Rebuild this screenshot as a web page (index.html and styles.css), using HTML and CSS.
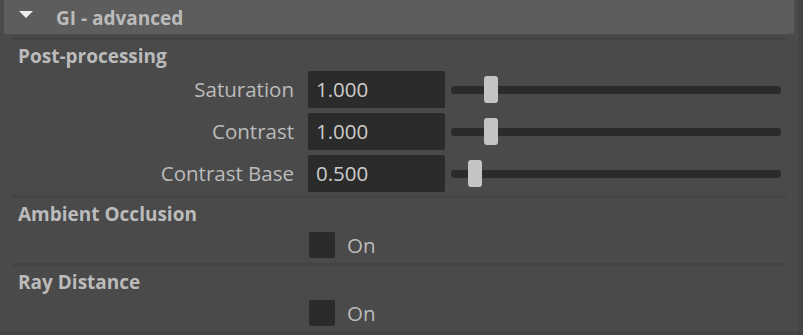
FILE: index.html
```html
<!DOCTYPE html>
<html>
<head>
	<link rel="stylesheet" href="styles.css">
</head>
<body>

	<div class="panel">
		<div class="frameHeader">
			<span class="arrow"></span>
			<span class="frameTitle">GI - advanced</span>
		</div>
		<div class="separator"></div>

		<div class="sectionTitle">Post-processing</div>
		<div class="attrRow">
			<div class="attrLabel">Saturation</div>
			<div class="attrField">1.000</div>
			<div class="slider"><div class="track"></div><div class="handle" style="left: 33px"></div></div>
		</div>
		<div class="attrRow">
			<div class="attrLabel">Contrast</div>
			<div class="attrField">1.000</div>
			<div class="slider"><div class="track"></div><div class="handle" style="left: 33px"></div></div>
		</div>
		<div class="attrRow">
			<div class="attrLabel">Contrast Base</div>
			<div class="attrField">0.500</div>
			<div class="slider"><div class="track"></div><div class="handle" style="left: 17px"></div></div>
		</div>
		<div class="separator"></div>

		<div class="sectionTitle">Ambient Occlusion</div>
		<div class="checkRow">
			<span class="checkbox"></span>
			<span class="checkLabel">On</span>
		</div>
		<div class="separator"></div>

		<div class="sectionTitle">Ray Distance</div>
		<div class="checkRow">
			<span class="checkbox"></span>
			<span class="checkLabel">On</span>
		</div>
	</div>
	<div class="scrollEdge"></div>

</body>
</html>
```

FILE: styles.css
```css
		html, body {
			margin: 0;
			padding: 0;
		}

		body {
			background-color: #4a4a4a;
			width: 803px;
			height: 335px;
			overflow: hidden;
			display: flex;
			align-items: flex-start;
			font-family: "Open Sans", "Noto Sans", sans-serif;
			color: #bbbbbb;
		}

		.panel {
			width: 798px;
			height: 331px;
			display: flex;
			flex-direction: column;
			border-bottom: 4px solid #454545;
		}

		.panel > * {
			flex-shrink: 0;
		}

		.scrollEdge {
			width: 5px;
			height: 335px;
			background-color: #444444;
		}

		.frameHeader {
			margin-left: 4px;
			width: 790px;
			height: 34px;
			box-sizing: border-box;
			padding-top: 5px;
			background-color: #5d5d5d;
			border-bottom-right-radius: 3px;
			display: flex;
			align-items: flex-start;
		}

		.arrow {
			width: 0;
			height: 0;
			margin: 6px 0 0 15px;
			border-left: 7.5px solid transparent;
			border-right: 7.5px solid transparent;
			border-top: 7px solid #eeeeee;
		}

		.frameTitle {
			margin-left: 23px;
			font-size: 19px;
			font-weight: bold;
			line-height: 26px;
		}

		.separator {
			margin: 3px 0 0 12px;
			width: 774px;
			height: 3px;
			background-color: #444444;
		}

		.sectionTitle {
			margin-top: 3px;
			padding-left: 18px;
			font-size: 19px;
			font-weight: bold;
			line-height: 26px;
			height: 26px;
		}

		.attrRow {
			display: flex;
			align-items: center;
			height: 37px;
			margin-top: 5px;
		}

		.sectionTitle + .attrRow {
			margin-top: 2px;
		}

		.attrLabel {
			width: 294px;
			text-align: right;
			font-size: 20.5px;
			line-height: 37px;
		}

		.attrField {
			margin-left: 14px;
			width: 137px;
			height: 37px;
			box-sizing: border-box;
			padding-left: 8px;
			background-color: #2b2b2b;
			border-radius: 2px;
			color: #cccccc;
			font-size: 20.5px;
			line-height: 37px;
		}

		.slider {
			position: relative;
			margin-left: 6px;
			width: 330px;
			height: 37px;
			display: flex;
			align-items: center;
		}

		.track {
			width: 100%;
			height: 8px;
			background-color: #2b2b2b;
			border-radius: 3px;
		}

		.handle {
			position: absolute;
			top: 5px;
			width: 14px;
			height: 27px;
			background-color: #c4c4c4;
			border-radius: 3px;
		}

		.checkRow {
			display: flex;
			align-items: center;
			height: 26px;
			margin: 5px 0 2px;
			padding-left: 309px;
		}

		.checkbox {
			width: 26px;
			height: 26px;
			background-color: #2b2b2b;
			border-radius: 2px;
		}

		.checkLabel {
			margin-left: 12px;
			font-size: 20.5px;
			line-height: 26px;
		}
```
